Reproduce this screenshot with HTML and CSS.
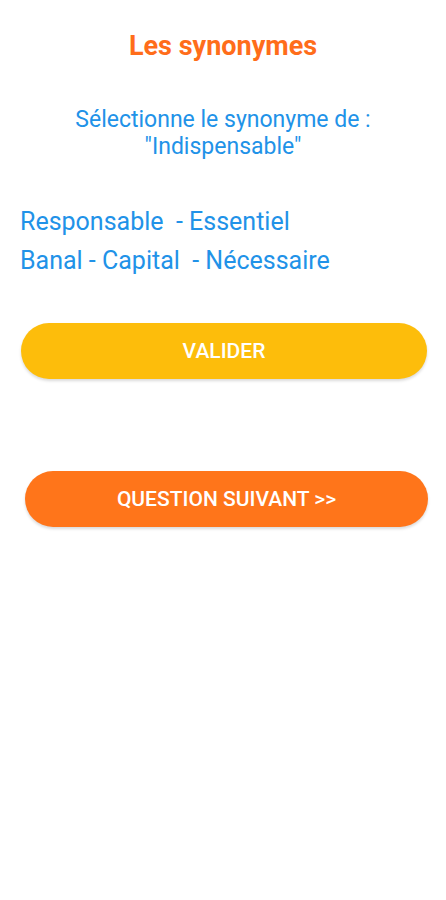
FILE: index.html
```html
<!DOCTYPE html>
<html lang="fr">

<head>
    <meta charset="UTF-8">
    <meta name="viewport" content="width=device-width, initial-scale=1.0">
    <title>Les synonymes</title>
    <link rel="stylesheet" href="styles.css">
</head>

<body>
    <div class="screen">
        <h1 class="title">Les synonymes</h1>

        <p class="question">Sélectionne le synonyme de :<br>"Indispensable"</p>

        <div class="choices">
            <div class="choice-row">Responsable&nbsp; - Essentiel</div>
            <div class="choice-row">Banal - Capital&nbsp; - Nécessaire</div>
        </div>

        <button class="btn btn-validate">VALIDER</button>
        <button class="btn btn-next">QUESTION SUIVANT &gt;&gt;</button>
    </div>
</body>

</html>
```

FILE: styles.css
```css
body {
    margin: 0;
    background-color: #fff;
    font-family: Roboto, "Noto Sans", Arial, sans-serif;
}

.screen {
    display: flex;
    flex-direction: column;
    min-height: 900px;
}

.title {
    margin: 31px 0 0;
    text-align: center;
    font-size: 27px;
    font-weight: bold;
    line-height: 30px;
    color: #ff6d1a;
}

.question {
    margin: 45px 0 0;
    text-align: center;
    font-size: 23px;
    line-height: 27px;
    color: #2192e8;
}

.choices {
    margin-top: 42px;
    padding-left: 20px;
    color: #2192e8;
    font-size: 25px;
}

.choice-row {
    line-height: 39px;
}

.btn {
    display: block;
    height: 56px;
    border: none;
    border-radius: 28px;
    color: #fff;
    font-family: Roboto, Arial, sans-serif;
    font-size: 21px;
    font-weight: 500;
    box-shadow: 0 2px 3px rgba(0, 0, 0, 0.15);
}

.btn-validate {
    margin: 43px 0 0 21px;
    width: 406px;
    background-color: #fdbd0b;
}

.btn-next {
    margin: 92px 0 0 25px;
    width: 403px;
    background-color: #ff751a;
}
```
